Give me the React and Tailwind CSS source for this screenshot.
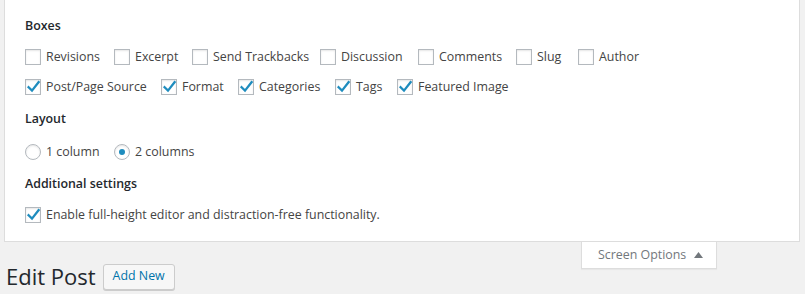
import React from "react";

const font = { fontFamily: '"Open Sans", "Noto Sans", sans-serif' };

function Box({ checked }) {
  return (
    <span className="relative inline-block w-[16px] h-[16px] shrink-0 border border-[#b4b9be] bg-white shadow-[inset_0_1px_2px_rgba(0,0,0,0.1)]">
      {checked && (
        <svg className="absolute left-[-1px] top-[-2px]" width="18" height="18" viewBox="0 0 18 18">
          <path d="M3.6 9.2 L7 12.6 L13.6 4.2" fill="none" stroke="#1e8cbe" strokeWidth="2.3" strokeLinecap="square" />
        </svg>
      )}
    </span>
  );
}

function Radio({ checked }) {
  return (
    <span className="inline-flex items-center justify-center w-[16px] h-[16px] shrink-0 rounded-full border border-[#b4b9be] bg-white shadow-[inset_0_1px_2px_rgba(0,0,0,0.1)]">
      {checked && <span className="block w-[6px] h-[6px] rounded-full bg-[#1e8cbe]" />}
    </span>
  );
}

function Item({ label, checked, w, radio }) {
  return (
    <label className={`flex items-center shrink-0 ${w}`}>
      {radio ? <Radio checked={checked} /> : <Box checked={checked} />}
      <span className="ml-[5px] text-[12.4px] text-[#444] whitespace-nowrap">{label}</span>
    </label>
  );
}

export default function App() {
  return (
    <div className="w-[805px] h-[294px] bg-[#f1f1f1] overflow-hidden" style={font}>
      <div className="ml-[4px] mr-[5px] bg-white border-x border-b border-[#ddd] pl-[20px] pt-[16px] pb-[11px]">
        <div className="h-[20px] flex items-center text-[12.4px] font-semibold text-[#23282d]">Boxes</div>
        <div className="mt-[6px] h-[30px] flex items-center">
          <Item label="Revisions" w="w-[89px]" />
          <Item label="Excerpt" w="w-[78px]" />
          <Item label="Send Trackbacks" w="w-[128px]" />
          <Item label="Discussion" w="w-[98px]" />
          <Item label="Comments" w="w-[98px]" />
          <Item label="Slug" w="w-[62px]" />
          <Item label="Author" w="w-[80px]" />
        </div>
        <div className="h-[30px] flex items-center">
          <Item label="Post/Page Source" checked w="w-[136px]" />
          <Item label="Format" checked w="w-[77px]" />
          <Item label="Categories" checked w="w-[97px]" />
          <Item label="Tags" checked w="w-[62px]" />
          <Item label="Featured Image" checked w="w-[120px]" />
        </div>
        <div className="mt-[7px] h-[20px] flex items-center text-[12.4px] font-semibold text-[#23282d]">Layout</div>
        <div className="mt-[8px] h-[30px] flex items-center">
          <Item label="1 column" radio w="w-[89px]" />
          <Item label="2 columns" radio checked w="w-[100px]" />
        </div>
        <div className="mt-[7px] h-[20px] flex items-center text-[12.4px] font-semibold text-[#23282d]">Additional settings</div>
        <div className="mt-[6px] h-[30px] flex items-center">
          <Item label="Enable full-height editor and distraction-free functionality." checked w="w-[400px]" />
        </div>
      </div>
      <div className="flex justify-end mr-[88px]">
        <div className="w-[136px] h-[27px] bg-white border-x border-b border-[#ddd] flex items-center pl-[16px] text-[12.4px] text-[#72777c] shadow-[0_1px_1px_rgba(0,0,0,0.04)]">
          <span>Screen Options</span>
          <svg className="ml-[8px]" width="9" height="6" viewBox="0 0 9 6">
            <path d="M0 6 L4.5 0 L9 6 Z" fill="#72777c" />
          </svg>
        </div>
      </div>
      <div className="flex items-center ml-[6px] mt-[-7px]">
        <h1 className="text-[22px] font-normal text-[#23282d] leading-[29px]">Edit Post</h1>
        <button className="ml-[7px] h-[26px] px-[9px] rounded-[3px] border border-[#ccc] bg-[#f7f7f7] text-[12.4px] text-[#0073aa] shadow-[0_1px_0_#ccc]">Add New</button>
      </div>
    </div>
  );
}
